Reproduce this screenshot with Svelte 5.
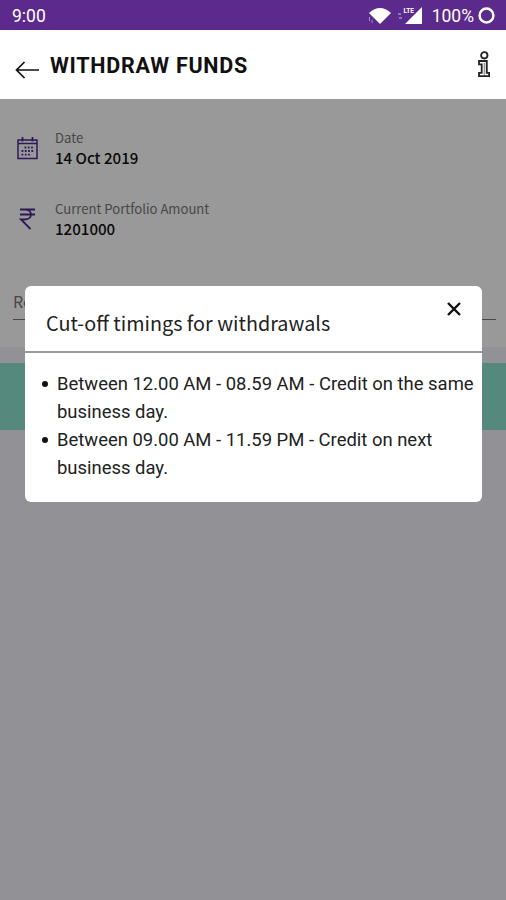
<script lang="ts">
	let showTimings = true;

	const details = [
		{ icon: 'calendar', label: 'Date', value: '14 Oct 2019' },
		{ icon: 'rupee', label: 'Current Portfolio Amount', value: '1201000' }
	];

	const timings = [
		'Between 12.00 AM - 08.59 AM - Credit on the same business day.',
		'Between 09.00 AM - 11.59 PM - Credit on next business day.'
	];

	function closeTimings() {
		showTimings = false;
	}
</script>

<div class="screen">
	<div class="status-bar">
		<span class="clock">9:00</span>
		<svg class="wifi" width="24" height="18" viewBox="0 0 24 18">
			<path d="M1 6 Q12 -4 23 6 L12 17 Z" fill="#fff" />
			<path d="M1.5 10v4M4 13v3" stroke="#a98bd0" stroke-width="1" />
		</svg>
		<svg class="signal" width="26" height="20" viewBox="0 0 26 20">
			<path d="M25 1v17H8z" fill="#fff" />
			<path d="M5 0h13.5v7.5H5z" fill="#5c2a8c" />
			<text x="6.5" y="6.5" class="lte">LTE</text>
			<path d="M1 8h3M2 12h3" stroke="#a98bd0" stroke-width="1.3" />
		</svg>
		<span class="battery">100%</span>
		<svg class="ring" width="17" height="17" viewBox="0 0 17 17">
			<circle cx="8.5" cy="8.5" r="6.9" fill="none" stroke="#fff" stroke-width="2.5" />
		</svg>
	</div>

	<header class="app-bar">
		<button class="icon-button back" aria-label="Back">
			<svg width="24" height="18" viewBox="0 0 24 18" fill="none" stroke="#111" stroke-width="1.7">
				<path d="M24 9H1.5M9.5 1 1.5 9l8 8" />
			</svg>
		</button>
		<h1>WITHDRAW FUNDS</h1>
		<button class="icon-button info" aria-label="Info">
			<svg width="14" height="27" viewBox="0 0 14 27" fill="#fff" stroke="#222" stroke-width="1.8">
				<circle cx="7.3" cy="4.3" r="3.2" />
				<path d="M2 10h7.8v11.8h2.3v3.4H2v-3.4h2.7v-8.4H2z" />
				<path d="M7.4 11.8v12" stroke="#999" stroke-width="1.6" />
			</svg>
		</button>
	</header>

	<main>
		<section class="form">
			{#each details as detail}
				<div class="detail">
					<span class="detail-icon">
						{#if detail.icon === 'calendar'}
							<svg width="21" height="23" viewBox="0 0 21 23" fill="none" stroke="#4b2a91" stroke-width="1.5">
								<path d="M1 3h19v18.5H1zM1 6.5h19" />
								<path d="M5.5 0v4.5M15.5 0v4.5" stroke-width="1.8" />
								<path d="M7.5 10.5h10M4.5 14h13M4.5 17.7h10" stroke-width="1.8" stroke-dasharray="1.8 1.5" />
							</svg>
						{:else}
							<svg width="17" height="22" viewBox="0 0 17 22" fill="none" stroke="#4b2a91" stroke-width="1.8">
								<path d="M1 1.5h15M1 6.5h15M1 1.5h5c8 0 8 10 0 10H2l9.5 9.5" />
							</svg>
						{/if}
					</span>
					<div class="detail-text">
						<span class="label">{detail.label}</span>
						<span class="value">{detail.value}</span>
					</div>
				</div>
			{/each}
			<div class="field">Re</div>
		</section>
		<div class="submit"></div>

		{#if showTimings}
			<div class="overlay">
				<div class="dialog" role="dialog">
					<div class="dialog-header">
						<h2>Cut-off timings for withdrawals</h2>
						<button class="icon-button close" aria-label="Close" on:click={closeTimings}>
							<svg width="14" height="14" viewBox="0 0 14 14" stroke="#111" stroke-width="2.4">
								<path d="M1 1l12 12M13 1 1 13" />
							</svg>
						</button>
					</div>
					<ul>
						{#each timings as timing}
							<li>{timing}</li>
						{/each}
					</ul>
				</div>
			</div>
		{/if}
	</main>
</div>

<style>
	:global(body) {
		margin: 0;
	}

	.screen {
		display: flex;
		flex-direction: column;
		width: 506px;
		height: 900px;
		overflow: hidden;
		font-family: Roboto, sans-serif;
		background: #f2f2fa;
	}

	.status-bar {
		display: flex;
		align-items: center;
		box-sizing: border-box;
		height: 30px;
		padding: 1px 11px 0 12px;
		background: #5c2a8c;
		color: #fff;
		font-size: 17.5px;
	}

	.clock {
		flex: 1;
	}

	.wifi {
		margin-right: 5px;
	}

	.signal {
		margin-right: 9px;
	}

	.lte {
		font-size: 6.5px;
		font-weight: 700;
		fill: #fff;
	}

	.battery {
		margin-right: 4px;
	}

	.app-bar {
		display: flex;
		align-items: center;
		box-sizing: border-box;
		height: 69px;
		padding: 0 15px;
		background: #fff;
	}

	.icon-button {
		display: flex;
		padding: 0;
		border: 0;
		background: none;
		cursor: pointer;
	}

	.back {
		margin-top: 11px;
	}

	h1 {
		flex: 1;
		margin: 3px 0 0 11px;
		font-size: 21.5px;
		font-weight: 700;
		line-height: 26px;
		letter-spacing: 0.75px;
		color: #111;
	}

	main {
		position: relative;
		flex: 1;
	}

	.form {
		box-sizing: border-box;
		height: 248px;
		padding: 28px 10px 0 13px;
		background: #fff;
	}

	.detail {
		display: flex;
		height: 71px;
	}

	.detail-icon {
		display: flex;
		justify-content: center;
		width: 29px;
		padding-top: 10px;
		margin-right: 13px;
	}

	.detail-text {
		display: flex;
		flex-direction: column;
		padding-top: 1px;
		font-family: 'Noto Sans CJK SC', sans-serif;
	}

	.label {
		font-size: 13.1px;
		line-height: 20px;
		color: #777;
	}

	.value {
		font-size: 15.1px;
		font-weight: 500;
		line-height: 18px;
		color: #111;
	}

	.field {
		height: 32px;
		margin-top: 18px;
		border-bottom: 1px solid #777;
		font-family: 'Noto Sans CJK SC', sans-serif;
		font-size: 16px;
		line-height: 28px;
		color: #777;
	}

	.submit {
		height: 67px;
		margin-top: 16px;
		background: #8ee4d3;
	}

	.overlay {
		position: absolute;
		inset: 0;
		box-sizing: border-box;
		padding: 187px 24px 0 25px;
		background: rgba(0, 0, 0, 0.4);
	}

	.dialog {
		box-sizing: border-box;
		height: 216px;
		border-radius: 6px;
		background: #fff;
	}

	.dialog-header {
		display: flex;
		justify-content: space-between;
		align-items: flex-start;
		box-sizing: border-box;
		height: 67px;
		padding: 16px 21px 0;
		border-bottom: 2px solid #999;
	}

	h2 {
		margin: 6px 0 0;
		font-family: 'Noto Sans CJK SC', sans-serif;
		font-size: 19.8px;
		font-weight: 400;
		line-height: 30px;
		color: #222;
	}

	ul {
		margin: 0;
		padding: 17px 6px 0 17px;
		list-style: none;
		font-size: 18.45px;
		line-height: 28px;
		color: #222;
	}

	li {
		display: flex;
	}

	li::before {
		content: '';
		flex: none;
		width: 6px;
		height: 6px;
		margin: 11px 9px 0 0;
		border-radius: 50%;
		background: #111;
	}
</style>
